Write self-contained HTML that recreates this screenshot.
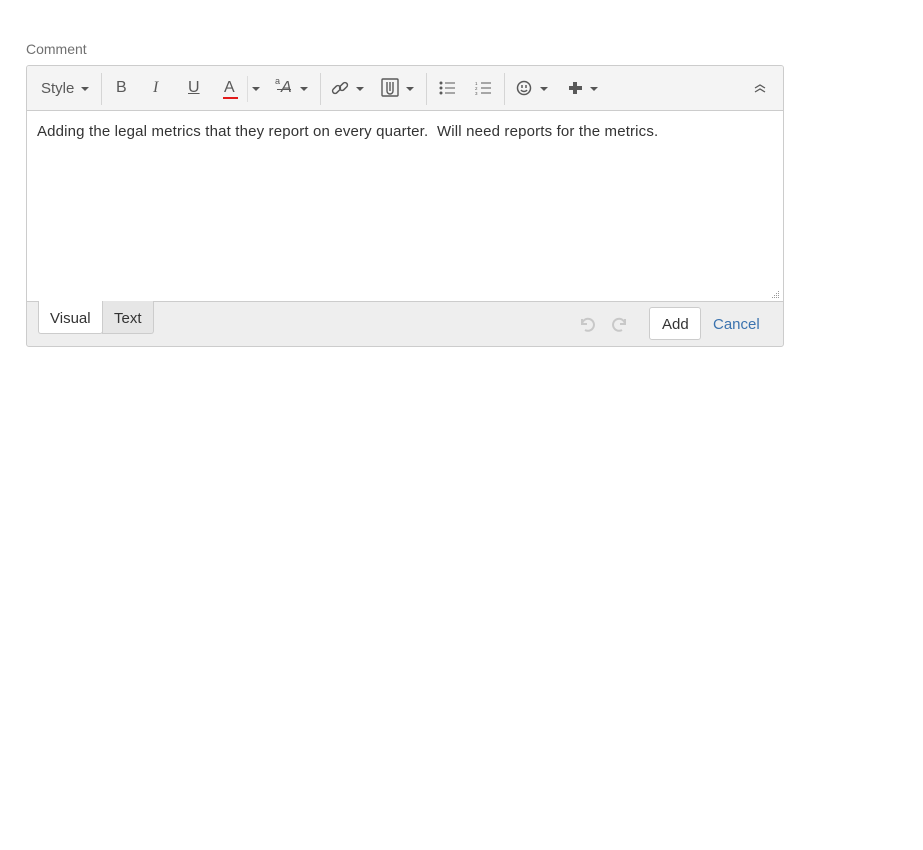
<!DOCTYPE html>
<html><head><style>
*{box-sizing:border-box;margin:0;padding:0}
body{width:923px;height:850px;background:#fff;font-family:"Liberation Sans",Arial,sans-serif;position:relative;color:#333}
.a{position:absolute}
.lbl{left:26px;top:41px;font-size:14px;color:#707070}
.box{left:26px;top:65px;width:758px;height:282px;border:1px solid #ccc;border-radius:3px;background:#eee;overflow:hidden}
.tb{left:0;top:0;width:756px;height:45px;background:#f4f4f4;border-bottom:1px solid #ccc}
.ed{left:0;top:45px;width:756px;height:191px;background:#fff;border-bottom:1px solid #ccc}
.t{font-size:15px;color:#595959}
.sep{width:1px;height:32px;top:7px;background:#d5d5d5}
.car{width:0;height:0;border-left:4px solid transparent;border-right:4px solid transparent;border-top:4px solid #555}
</style></head><body>
<div class="a lbl">Comment</div>
<div class="a box">
 <div class="a tb">
  <div class="a t" style="left:14px;top:14px">Style</div><div class="a car" style="left:54px;top:21px"></div>
  <div class="a sep" style="left:74px"></div>
  <div class="a t" style="left:89px;top:13px;font-size:16px">B</div>
  <div class="a t" style="left:126px;top:13px;font-size:16px;font-family:'Liberation Serif',serif;font-style:italic">I</div>
  <div class="a t" style="left:161px;top:13px;font-size:16px;text-decoration:underline">U</div>
  <div class="a t" style="left:197px;top:13px;font-size:16px">A</div>
  <div class="a" style="left:196px;top:31px;width:15px;height:2px;background:#e21b1b"></div>
  <div class="a sep" style="left:220px;top:10px;height:26px;background:#ddd"></div>
  <div class="a car" style="left:225px;top:21px"></div>
  <div class="a t" style="left:248px;top:10px;font-size:9px">a</div>
  <div class="a t" style="left:254px;top:13px;font-size:16px;font-style:italic">A</div>
  <div class="a" style="left:250px;top:23px;width:14px;height:1px;background:#595959"></div>
  <div class="a car" style="left:273px;top:21px"></div>
  <div class="a sep" style="left:293px"></div>
  <svg class="a" style="left:304px;top:13px" width="18" height="18" viewBox="0 0 18 18" fill="none" stroke="#595959" stroke-width="1.5"><rect x="1" y="8" width="9" height="5" rx="2.5" transform="rotate(-45 5.5 10.5)"/><rect x="8" y="5" width="9" height="5" rx="2.5" transform="rotate(-45 12.5 7.5)"/></svg>
  <div class="a car" style="left:329px;top:21px"></div>
  <svg class="a" style="left:354px;top:12px" width="18" height="20" viewBox="0 0 18 20" fill="none" stroke="#595959" stroke-width="1.4"><rect x="1" y="1" width="16" height="17" rx="1"/><path d="M6 4v9a3 3 0 0 0 6 0V4M9 4v9"/></svg>
  <div class="a car" style="left:379px;top:21px"></div>
  <div class="a sep" style="left:399px"></div>
  <svg class="a" style="left:412px;top:15px" width="16" height="14" viewBox="0 0 16 14" fill="#595959"><circle cx="2" cy="2" r="1.5"/><circle cx="2" cy="7" r="1.5"/><circle cx="2" cy="12" r="1.5"/><rect x="6" y="1.5" width="10" height="1"/><rect x="6" y="6.5" width="10" height="1"/><rect x="6" y="11.5" width="10" height="1"/></svg>
  <svg class="a" style="left:448px;top:15px" width="16" height="14" viewBox="0 0 16 14" fill="#595959"><text x="0" y="4" font-size="4.5">1</text><text x="0" y="9" font-size="4.5">2</text><text x="0" y="14" font-size="4.5">3</text><rect x="6" y="1.5" width="10" height="1"/><rect x="6" y="6.5" width="10" height="1"/><rect x="6" y="11.5" width="10" height="1"/></svg>
  <div class="a sep" style="left:477px"></div>
  <svg class="a" style="left:489px;top:14px" width="16" height="16" viewBox="0 0 16 16" fill="none" stroke="#595959" stroke-width="1.5"><circle cx="8" cy="8" r="6.5"/><path d="M6 5v3M10 5v3M5 10a3.5 3 0 0 0 6 0"/></svg>
  <div class="a car" style="left:513px;top:21px"></div>
  <div class="a" style="left:542px;top:20px;width:13px;height:4px;background:#595959"></div>
  <div class="a" style="left:546px;top:16px;width:4px;height:12px;background:#595959"></div>
  <div class="a car" style="left:563px;top:21px"></div>
  <svg class="a" style="left:727px;top:17px" width="12" height="10" viewBox="0 0 12 10" fill="none" stroke="#595959" stroke-width="1.3"><path d="M1 5l5-3 5 3M1 9l5-3 5 3"/></svg>
 </div>
 <div class="a ed"><div class="a" style="left:10px;top:12px;font-size:15px;letter-spacing:0.16px;color:#333;white-space:nowrap">Adding the legal metrics that they report on every quarter.&nbsp; Will need reports for the metrics.</div>
  <svg class="a" style="left:744px;top:179px" width="9" height="9" fill="#999"><rect x="7" y="1" width="1" height="1"/><rect x="5" y="3" width="1" height="1"/><rect x="7" y="3" width="1" height="1"/><rect x="3" y="5" width="1" height="1"/><rect x="5" y="5" width="1" height="1"/><rect x="7" y="5" width="1" height="1"/><rect x="1" y="7" width="1" height="1"/><rect x="3" y="7" width="1" height="1"/><rect x="5" y="7" width="1" height="1"/><rect x="7" y="7" width="1" height="1"/></svg>
 </div>
 <div class="a" style="left:11px;top:235px;width:65px;height:33px;background:#fff;border:1px solid #ccc;border-top:none;border-radius:0 0 3px 3px;font-size:15px;padding:9px 0 0 11px">Visual</div>
 <div class="a" style="left:75px;top:235px;width:52px;height:33px;background:#e6e6e6;border:1px solid #ccc;border-top:none;border-radius:0 0 3px 0;font-size:15px;padding:9px 0 0 11px">Text</div>
 <svg class="a" style="left:551px;top:249px" width="18" height="18" viewBox="0 0 18 18" fill="none" stroke="#c8c8c8" stroke-width="2"><path d="M4 4v5h5"/><path d="M4 9a6 6 0 1 1 3 6"/></svg>
 <svg class="a" style="left:584px;top:249px" width="18" height="18" viewBox="0 0 18 18" fill="none" stroke="#c8c8c8" stroke-width="2"><path d="M14 4v5H9"/><path d="M14 9a6 6 0 1 0-3 6"/></svg>
 <div class="a" style="left:622px;top:241px;width:52px;height:33px;background:#fff;border:1px solid #ccc;border-radius:3px;font-size:15px;padding:8px 0 0 12px">Add</div>
 <div class="a" style="left:686px;top:250px;font-size:15px;color:#3b73af">Cancel</div>
</div>
</body></html>
